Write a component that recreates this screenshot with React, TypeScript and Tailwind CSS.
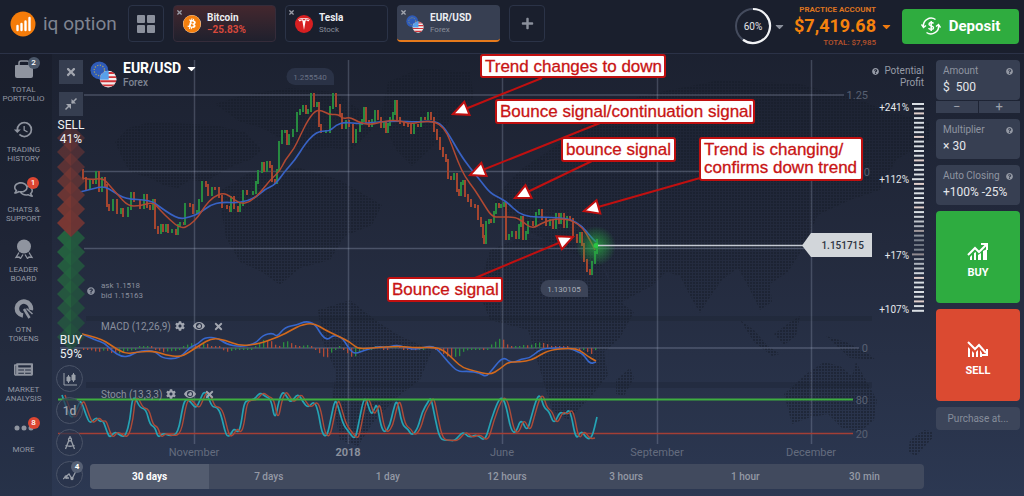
import { FaBitcoin, FaCaretDown, FaCog, FaEye, FaNewspaper, FaPlus, FaQuestionCircle, FaRegComments, FaTimes } from 'react-icons/fa'
import { MdHistory } from 'react-icons/md'
import { SiTesla } from 'react-icons/si'

type Point = [number, number]

const prices: Point[] = [
  [81, 170], [83, 178], [86, 188], [90, 180], [93, 182], [96, 172], [99, 190], [102, 178], [105, 185], [107, 205], [109, 209], [113, 200],
  [117, 212], [121, 209], [123, 215], [128, 208], [131, 193], [134, 200], [140, 207], [144, 195], [147, 206], [150, 208],
  [153, 200], [155, 227], [158, 232], [161, 225], [163, 230], [166, 225], [168, 231], [172, 230], [176, 233], [178, 225],
  [180, 223], [184, 223], [185, 204], [190, 205], [193, 212], [197, 211], [199, 200], [202, 182], [206, 185], [208, 194],
  [212, 188], [215, 188], [219, 196], [222, 206], [227, 207], [230, 210], [231, 197], [234, 207], [238, 210], [240, 204],
  [243, 191], [247, 193], [253, 192], [256, 182], [258, 171], [262, 163], [264, 170], [267, 162], [270, 166], [272, 180],
  [275, 182], [277, 170], [279, 142], [282, 131], [285, 131], [287, 143], [289, 135], [293, 130], [297, 113], [300, 110],
  [303, 106], [306, 112], [308, 110], [311, 94], [314, 105], [317, 103], [319, 125], [321, 131], [326, 131], [330, 107],
  [333, 94], [336, 105], [340, 114], [342, 127], [346, 121], [349, 125], [353, 141], [356, 130], [360, 123], [362, 120],
  [364, 108], [366, 121], [369, 125], [372, 120], [375, 111], [378, 118], [381, 126], [384, 123], [386, 131], [388, 124],
  [390, 118], [393, 113], [395, 101], [397, 118], [400, 122], [404, 124], [408, 125], [411, 132], [414, 125], [418, 125],
  [421, 118], [425, 118], [428, 113], [431, 118], [434, 130], [437, 138], [440, 148], [443, 155], [446, 160], [448, 177],
  [451, 178], [454, 174], [457, 190], [459, 194], [461, 183], [463, 181], [465, 195], [468, 200], [471, 205], [475, 206],
  [478, 218], [481, 225], [483, 236], [484, 242], [486, 222], [489, 220], [491, 221], [494, 212], [496, 204], [499, 206],
  [501, 205], [504, 203], [506, 238], [509, 235], [512, 232], [516, 237], [519, 225], [521, 217], [523, 238], [526, 232],
  [528, 222], [533, 224], [536, 213], [539, 210], [542, 218], [546, 224], [550, 220], [553, 227], [556, 214], [559, 222],
  [561, 214], [564, 226], [567, 217], [570, 219], [573, 235], [577, 241], [580, 233], [582, 244], [584, 260], [587, 270],
  [590, 273], [592, 262], [595, 252], [597, 240],
]

const fastAverage: Point[] = [
  [82, 178], [90, 180], [103, 178], [110, 186], [118, 195], [128, 206], [140, 206], [153, 202], [160, 210], [170, 220],
  [181, 229], [190, 225], [198, 217], [205, 206], [213, 197], [223, 193], [230, 196], [240, 204], [250, 202], [260, 193],
  [270, 180], [280, 171], [285, 160], [294, 149], [300, 136], [308, 120], [315, 111], [321, 110], [330, 115], [338, 114],
  [343, 119], [350, 117], [358, 122], [370, 125], [385, 121], [398, 120], [410, 124], [420, 122], [434, 121], [444, 128],
  [450, 140], [458, 162], [465, 177], [475, 190], [483, 203], [492, 217], [500, 217], [515, 217], [522, 221], [532, 229],
  [542, 223], [553, 219], [565, 219], [573, 221], [583, 228], [590, 240], [595, 250],
]

const slowAverage: Point[] = [
  [80, 192], [92, 189], [104, 186], [114, 192], [125, 199], [150, 200], [160, 207], [170, 214], [180, 219], [190, 217],
  [200, 213], [210, 205], [222, 202], [240, 203], [255, 198], [265, 189], [275, 185], [285, 171], [295, 160], [305, 144],
  [313, 135], [320, 131], [330, 131], [336, 125], [345, 122], [360, 124], [375, 122], [400, 121], [415, 122], [430, 121],
  [440, 123], [448, 133], [460, 154], [470, 168], [480, 180], [490, 193], [500, 198], [508, 203], [518, 213], [530, 217],
  [545, 217], [560, 218], [570, 219], [582, 226], [590, 236], [596, 242],
]

const macd: Point[] = [
  [82, 334], [95, 340], [105, 343], [112, 351], [122, 357], [130, 356], [136, 352], [148, 350], [156, 352], [162, 358],
  [175, 359], [183, 355], [190, 347], [198, 344], [205, 337], [218, 338], [226, 344], [240, 347], [255, 344], [263, 335],
  [273, 333], [277, 337], [285, 327], [297, 325], [306, 321], [315, 324], [322, 336], [328, 340], [333, 335], [341, 337],
  [345, 342], [350, 350], [355, 354], [365, 350], [380, 346], [385, 348], [396, 345], [405, 347], [415, 350], [432, 345],
  [440, 352], [448, 362], [458, 372], [468, 371], [480, 373], [486, 377], [492, 370], [500, 360], [505, 358], [510, 362],
  [516, 362], [521, 359], [530, 358], [538, 351], [545, 348], [570, 348], [578, 352], [583, 354], [590, 364], [596, 362],
]

const macdSignal: Point[] = [
  [82, 334], [100, 338], [112, 346], [125, 354], [138, 352], [155, 351], [165, 355], [180, 357], [188, 353], [200, 345],
  [212, 338], [225, 340], [240, 346], [258, 344], [270, 340], [285, 334], [300, 325], [314, 323], [325, 330], [338, 336],
  [350, 342], [358, 349], [370, 348], [400, 346], [415, 348], [435, 347], [445, 351], [455, 361], [463, 368], [475, 371],
  [490, 375], [500, 369], [508, 362], [520, 362], [532, 360], [540, 355], [550, 350], [570, 348], [580, 350], [587, 356],
  [596, 361],
]

const stoch: Point[] = [
  [62, 395], [67, 410], [72, 419], [76, 411], [80, 401], [82, 403], [86, 415], [90, 424], [96, 417], [100, 422],
  [103, 420], [107, 432], [110, 438], [115, 431], [122, 437], [126, 435], [130, 420], [132, 400], [135, 397], [140, 408],
  [146, 409], [150, 425], [155, 427], [158, 438], [163, 433], [170, 436], [178, 434], [183, 405], [186, 399], [190, 401],
  [196, 409], [200, 400], [204, 391], [208, 396], [212, 407], [217, 407], [221, 414], [226, 436], [230, 436], [234, 428],
  [238, 433], [241, 425], [244, 403], [248, 400], [254, 400], [260, 392], [266, 397], [271, 399], [275, 421], [279, 400],
  [283, 391], [287, 397], [291, 403], [298, 393], [303, 402], [308, 408], [314, 401], [318, 410], [322, 434], [327, 437],
  [331, 418], [335, 399], [338, 406], [343, 424], [348, 431], [355, 440], [358, 427], [363, 401], [366, 398], [371, 415],
  [374, 410], [377, 403], [381, 427], [385, 433], [390, 425], [393, 411], [397, 398], [402, 425], [408, 429], [412, 436],
  [418, 428], [422, 412], [428, 402], [431, 397], [435, 418], [440, 440], [448, 440], [455, 441], [463, 431], [469, 438],
  [477, 434], [485, 442], [491, 420], [498, 401], [502, 397], [506, 405], [511, 431], [516, 433], [521, 418], [527, 432],
  [531, 418], [536, 400], [540, 394], [544, 408], [549, 411], [554, 425], [560, 411], [565, 415], [570, 408], [576, 441],
  [581, 430], [587, 439], [592, 438], [597, 417],
]

const continents = [
  'M115 142L128 128L150 122L215 125L245 132L262 150L250 160L235 165L222 172L205 182L190 180L178 188L165 186L150 178L130 172L122 158Z',
  'M215 104L240 96L262 92L290 88L335 92L360 110L372 130L352 150L330 148L300 150L262 128L240 122Z',
  'M218 192L250 172L300 168L340 180L382 205L372 225L345 236L330 260L300 268L280 285L262 272L240 262L226 238Z',
  'M388 82L420 68L470 72L474 98L450 120L440 140L412 166L396 150L380 118Z',
  'M318 310L350 300L378 322L400 336L432 350L420 380L396 398L372 424L358 446L340 440L332 400L336 372L322 340Z',
  'M490 250L520 238L566 240L600 262L618 300L634 312L620 338L604 352L608 375L590 398L568 420L552 410L540 370L528 330L490 320L478 290Z',
  'M492 200L520 170L550 150L590 120L640 96L720 80L800 84L860 100L890 112L930 122L930 140L896 160L880 190L850 200L818 215L802 250L788 272L770 284L772 302L760 310L750 290L738 268L722 280L708 300L700 313L690 296L680 276L666 272L652 286L618 304L606 270L566 250L530 232Z',
  'M616 380L630 368L634 378L624 396L616 394Z',
  'M740 320L754 330L768 346L780 354L772 356L754 342Z',
  'M774 334L790 322L800 316L796 336L784 345Z',
  'M826 336L846 342L866 352L876 360L850 358Z',
  'M784 394L806 374L824 362L840 366L852 376L856 362L868 384L877 400L874 420L860 432L842 428L828 414L808 418L792 424Z',
  'M910 440L924 430L938 432L916 456L908 452Z',
]

const annotations = [
  { lines: ['Trend changes to down'], x: 481, y: 55, w: 184, h: 22, from: [542, 78], tip: [453, 114] },
  { lines: ['Bounce signal/continuation signal'], x: 496, y: 100, w: 258, h: 23, from: [600, 123], tip: [470, 175] },
  { lines: ['bounce signal'], x: 562, y: 138, w: 113, h: 23, from: [592, 161], tip: [515, 198] },
  { lines: ['Trend is changing/', 'confirms down trend'], x: 700, y: 138, w: 162, h: 42, from: [700, 178], tip: [584, 211] },
  { lines: ['Bounce signal'], x: 388, y: 278, w: 114, h: 23, from: [475, 278], tip: [573, 237] },
]

const months = [
  { x: 194, label: 'November' },
  { x: 348, label: '2018' },
  { x: 502, label: 'June' },
  { x: 657, label: 'September' },
  { x: 811, label: 'December' },
]

const frames = ['30 days', '7 days', '1 day', '12 hours', '3 hours', '1 hour', '30 min']

// midpoint quadratic smoothing
function toCurve(points: Point[], dx = 0) {
  let d = `M${points[0][0] + dx} ${points[0][1]}`
  for (let i = 1; i < points.length - 1; i++) {
    const [x, y] = points[i]
    const [nx, ny] = points[i + 1]
    d += `Q${x + dx} ${y} ${(x + nx) / 2 + dx} ${(y + ny) / 2}`
  }
  const last = points[points.length - 1]
  return `${d}L${last[0] + dx} ${last[1]}`
}

function valueAt(points: Point[], x: number) {
  for (let i = 1; i < points.length; i++) {
    if (x <= points[i][0]) {
      const [x0, y0] = points[i - 1]
      const [x1, y1] = points[i]
      return y0 + ((y1 - y0) * (x - x0)) / (x1 - x0)
    }
  }
  return points[points.length - 1][1]
}

function arrowHead([fx, fy]: number[], [tx, ty]: number[]) {
  const len = Math.hypot(tx - fx, ty - fy)
  const ux = (tx - fx) / len
  const uy = (ty - fy) / len
  const bx = tx - ux * 15
  const by = ty - uy * 15
  return `${tx},${ty} ${bx - uy * 7},${by + ux * 7} ${bx + uy * 7},${by - ux * 7}`
}

function Flags({ className }: { className: string }) {
  return (
    <svg viewBox="0 0 26 26" className={className} aria-hidden>
      <circle cx="9" cy="9" r="8.5" fill="#2f5bb8" />
      <circle cx="9" cy="9" r="5" fill="none" stroke="#a8a25c" strokeWidth="1.2" strokeDasharray="1.2 1.4" />
      <clipPath id="us"><circle cx="17.5" cy="17.5" r="8" /></clipPath>
      <g clipPath="url(#us)">
        <rect x="9" y="9" width="17" height="17" fill="#f3eeee" />
        <path d="M9 11.5h17M9 15.5h17M9 19.5h17M9 23.5h17" stroke="#d03238" strokeWidth="1.8" />
        <rect x="9" y="9" width="9" height="9" fill="#58a0ea" />
      </g>
    </svg>
  )
}

function Header() {
  return (
    <header className="flex h-[54px] shrink-0 items-start border-b border-[#2b3247] bg-[#1a1f2d] pr-[5px] pl-[10px]">
      <a href="#home" className="mt-[11px] flex w-[118px] items-center gap-[7px]" aria-label="iq option">
        <svg viewBox="0 0 26 26" className="size-[26px]" aria-hidden>
          <circle cx="13" cy="13" r="12.5" fill="#f57c0a" />
          <path d="M7.5 19v-4M11.5 19v-6M15.5 19v-8.500M19.500 19V7" stroke="#fff" strokeWidth="2.400" strokeLinecap="round" />
        </svg>
        <span className="text-[19px] leading-6 text-[#7f8491]">iq option</span>
      </a>
      <nav className="mt-[5px] flex gap-[9px]" aria-label="Open assets">
        <button className="flex h-[37px] w-9 items-center justify-center rounded-sm border border-[#2b3347]" aria-label="Layout">
          <svg viewBox="0 0 18 18" className="size-[18px] fill-[#8b909c]" aria-hidden>
            <rect width="8" height="8" rx="1" />
            <rect x="10" width="8" height="8" rx="1" />
            <rect y="10" width="8" height="8" rx="1" />
            <rect x="10" y="10" width="8" height="8" rx="1" />
          </svg>
        </button>
        <button className="relative flex h-[37px] w-[103px] items-center gap-[6px] rounded-sm border border-[#352c3a] bg-linear-to-b from-[#44272e] to-[#1f202d] pl-[9px] text-left">
          <FaTimes className="absolute top-[3px] left-[2px] size-[7px] text-[#9a9ea8]" />
          <span className="size-[18px] shrink-0 rounded-full bg-white"><FaBitcoin className="size-[18px] text-[#f5800f]" /></span>
          <span>
            <span className="block text-[10px] leading-3 font-bold text-[#eceef1]">Bitcoin</span>
            <span className="block text-[10px] leading-3 font-bold text-[#d8493c]">−25.83%</span>
          </span>
        </button>
        <button className="relative flex h-[37px] w-[103px] items-center gap-[6px] rounded-sm border border-[#2b3347] pl-[9px] text-left">
          <FaTimes className="absolute top-[3px] left-[2px] size-[7px] text-[#9a9ea8]" />
          <span className="flex size-[18px] shrink-0 items-center justify-center rounded-full bg-[#d71f21]"><SiTesla className="size-3 text-white" /></span>
          <span>
            <span className="block text-[10px] leading-3 font-bold text-[#eceef1]">Tesla</span>
            <span className="block text-[8px] leading-3 text-[#8a8f9b]">Stock</span>
          </span>
        </button>
        <button className="relative flex h-[37px] w-[103px] items-center gap-[6px] rounded-sm border-b-2 border-[#e67a1c] bg-[#373f52] pt-[2px] pl-[9px] text-left">
          <FaTimes className="absolute top-[4px] left-[3px] size-[7px] text-[#a3a7b0]" />
          <Flags className="size-[18px] shrink-0" />
          <span>
            <span className="block text-[10px] leading-3 font-bold text-[#eceef1]">EUR/USD</span>
            <span className="block text-[8px] leading-3 text-[#8a8f9b]">Forex</span>
          </span>
        </button>
        <button className="flex h-[37px] w-9 items-center justify-center rounded-sm border border-[#2b3347] text-[#8b909c]" aria-label="Add asset">
          <FaPlus className="size-[13px]" />
        </button>
      </nav>
      <div className="mt-[5px] ml-auto flex items-center">
        <svg viewBox="0 0 38 38" className="size-[38px]" role="img" aria-label="60%">
          <circle cx="19" cy="19" r="17" fill="none" stroke="#444b5d" strokeWidth="2" />
          <path d="M19 2A17 17 0 1 1 9 32.750" fill="none" stroke="#f2f3f5" strokeWidth="2.200" />
          <text x="19" y="23" textAnchor="middle" fontSize="10" fill="#e3e5e9">60%</text>
        </svg>
        <FaCaretDown className="ml-px size-[13px] text-[#8b909c]" />
        <div className="ml-[6px] w-[84px] text-right font-medium">
          <p className="text-[8px] leading-[9px] font-bold whitespace-nowrap text-[#dd7420]">PRACTICE ACCOUNT</p>
          <p className="text-[18px] leading-6 font-bold text-[#f5820d]">$7,419.68</p>
          <p className="text-[8px] leading-[9px] text-[#b8532c]">TOTAL: $7,985</p>
        </div>
        <FaCaretDown className="mr-[9px] ml-1 size-[13px] text-[#ee7a10]" />
        <button className="flex h-[35px] w-[117px] items-center justify-center gap-2 rounded-sm bg-[#2fac3f] text-[15px] font-bold text-white">
          <svg viewBox="0 0 20 20" className="size-5" fill="none" stroke="#fff" strokeWidth="1.500" aria-hidden>
            <path d="M2.500 11A7.700 7.700 0 0 1 14.500 3.500M17.500 9A7.700 7.700 0 0 1 5.500 16.500" />
            <path d="M.5 8.500L2.500 11.500L5 9.500M19.500 11.500L17.500 8.500L15 10.500" />
            <path d="M12.500 7.500C11.500 6.200 8 6.200 8 8.200S12.500 9.600 12.500 11.700S9 13.800 7.500 12.300M10.200 5v10" />
          </svg>
          Deposit
        </button>
      </div>
    </header>
  )
}

const menu = [
  {
    label: ['TOTAL', 'PORTFOLIO'],
    badge: '2',
    badgeClass: 'bg-[#4c586a]',
    icon: (
      <svg viewBox="0 0 20 20" className="size-5" aria-hidden>
        <path d="M5 7V4Q5 2 7 2H13Q15 2 15 4V7" fill="none" stroke="currentColor" strokeWidth="1.500" />
        <path d="M2 6H18Q19 6 19 7V17Q19 19 17 19H3Q1 19 1 17V7Q1 6 2 6Z" fill="currentColor" />
      </svg>
    ),
  },
  { label: ['TRADING', 'HISTORY'], icon: <MdHistory className="size-[21px]" /> },
  { label: ['CHATS &', 'SUPPORT'], badge: '1', badgeClass: 'bg-[#dc4632]', icon: <FaRegComments className="size-[19px]" /> },
  {
    label: ['LEADER', 'BOARD'],
    icon: (
      <svg viewBox="0 0 20 20" className="size-5" aria-hidden>
        <circle cx="10" cy="7.500" r="7" fill="currentColor" />
        <path d="M5 13.500L2 18.500L5 18L6.500 19.500L9 15.500M15 13.500L18 18.500L15 18L13.500 19.500L11 15.500" fill="none" stroke="currentColor" strokeWidth="1.300" />
      </svg>
    ),
  },
  {
    label: ['OTN', 'TOKENS'],
    icon: (
      <svg viewBox="0 0 20 20" className="size-5" fill="none" stroke="currentColor" aria-hidden>
        <path d="M9 16.500A7 7 0 1 1 16.800 11" strokeWidth="4.500" />
        <path d="M10 10L15.500 19" strokeWidth="2.500" />
        <path d="M12.500 9.500L18.500 15" strokeWidth="1.500" />
      </svg>
    ),
  },
  { label: ['MARKET', 'ANALYSIS'], icon: <FaNewspaper className="size-[19px]" /> },
  {
    label: ['MORE'],
    badge: '8',
    badgeClass: 'bg-[#dc4632]',
    icon: (
      <svg viewBox="0 0 20 20" className="size-5 fill-current" aria-hidden>
        <circle cx="3" cy="9" r="2.500" />
        <circle cx="10" cy="9" r="2.500" />
        <circle cx="17" cy="9" r="2.500" />
      </svg>
    ),
  },
]

function Sidebar() {
  return (
    <nav className="w-[52px] shrink-0 bg-black/10 pt-[5px] pr-[5px]" aria-label="Main menu">
      {menu.map((item) => (
        <a key={item.label[0]} href={`#${item.label[0].toLowerCase()}`} className="flex h-[60px] flex-col items-center">
          <span className="relative flex h-5 items-center text-[#8f949f]">
            {item.icon}
            {item.badge && (
              <span className={`absolute -top-[2px] -right-[6px] flex size-3 items-center justify-center rounded-full text-[8px] font-medium text-white ${item.badgeClass}`}>
                {item.badge}
              </span>
            )}
          </span>
          <span className="mt-[6px] text-center text-[8px] leading-[9px] text-[#9297a3]">
            {item.label.map((line) => <span key={line} className="block">{line}</span>)}
          </span>
        </a>
      ))}
    </nav>
  )
}

function Tools() {
  const round = 'relative flex size-[27px] shrink-0 items-center justify-center rounded-full border border-[#4b5468] bg-[#2a334a]/70 text-[#9aa0aa]'
  return (
    <div className="relative flex w-[30px] shrink-0 flex-col items-center pt-[6px]">
      <button className="flex size-6 shrink-0 items-center justify-center bg-[#363e50] text-[#a2a6af]" aria-label="Close chart">
        <FaTimes className="size-3" />
      </button>
      <button className="mt-2 flex size-6 shrink-0 items-center justify-center bg-[#363e50] text-[#a2a6af]" aria-label="Collapse chart">
        <svg viewBox="0 0 14 14" className="size-[14px]" aria-hidden>
          <path d="M1.500 12.500L6 8M12.500 1.500L8 6" stroke="currentColor" strokeWidth="1.500" />
          <path d="M2 7H7V12ZM7.500 2V6.500H12Z" fill="currentColor" />
        </svg>
      </button>
      <div className="relative mt-[2px] flex h-[243px] w-[30px] flex-col items-center text-[12px] leading-[14px] text-[#eef0f2]">
        <svg viewBox="56 118 30 243" className="absolute inset-0 h-full w-full" aria-hidden>
          {[337, 323, 308, 294, 280, 266, 252, 238].map((y, i) => (
            <g key={y}>
              <path d={`M71 ${y - 14}L57 ${y}L71 ${y + 14}L85 ${y}Z`} fill="#25643f" fillOpacity={0.6 + i * 0.05} />
              <path d={`M71 ${y - 14}L85 ${y}L71 ${y + 14}Z`} fill="#1f2c3c" fillOpacity="0.22" />
            </g>
          ))}
          {[138, 152, 167, 181, 195, 209, 223].map((y, i) => (
            <g key={y}>
              <path d={`M71 ${y - 14}L57 ${y}L71 ${y + 14}L85 ${y}Z`} fill="#7a3833" fillOpacity={0.5 + i * 0.08} />
              <path d={`M71 ${y - 14}L85 ${y}L71 ${y + 14}Z`} fill="#242a3c" fillOpacity="0.15" />
            </g>
          ))}
        </svg>
        <span className="relative">SELL</span>
        <span className="relative">41%</span>
        <span className="relative mt-auto">BUY</span>
        <span className="relative">59%</span>
      </div>
      <div className="mt-[4px] flex flex-col gap-[5px] pr-[3px]">
        <button className={round} aria-label="Chart type">
          <svg viewBox="0 0 14 14" className="size-[14px]" fill="none" stroke="currentColor" aria-hidden>
            <path d="M1 1V13H14M5.500 3V11M10.500 1V10" />
            <path d="M4 5h3v4H4zM9 3h3v5H9z" fill="currentColor" />
          </svg>
        </button>
        <button className={`${round} text-[12px] font-medium`}>1d</button>
        <button className={round} aria-label="Drawing tools">
          <svg viewBox="0 0 14 14" className="size-[14px]" fill="none" stroke="currentColor" strokeWidth="1.300" aria-hidden>
            <path d="M7 0V2M6 4L2.500 13M8 4L11.500 13M2.500 9.500Q7 11 11.500 9.500" />
            <circle cx="7" cy="3.500" r="1.500" />
          </svg>
        </button>
        <button className={round} aria-label="Indicators">
          <svg viewBox="0 0 14 14" className="size-[14px]" fill="none" stroke="currentColor" strokeWidth="1.300" aria-hidden>
            <path d="M0 11L3 8.500L6 6L9 11L13 3M3 10H6" />
            <circle cx="3" cy="9" r="1" />
            <circle cx="9" cy="10.500" r="1" />
          </svg>
          <span className="absolute -top-[1px] -right-[1px] flex size-3 items-center justify-center rounded-full bg-[#566074] text-[8px] font-bold text-white">4</span>
        </button>
      </div>
    </div>
  )
}

function Chart() {
  const bars: { x: number; y: number; h: number; up: boolean }[] = []
  for (let i = 1; i < prices.length; i++) {
    const [x, y] = prices[i]
    const prev = prices[i - 1][1]
    bars.push({ x, y: Math.min(prev, y) - 1, h: Math.abs(y - prev) + 3, up: y < prev || (y === prev && i % 2 === 0) })
  }
  const histogram: { x: number; v: number; up: boolean }[] = []
  for (let x = 83; x < 597; x += 4) {
    const v = (valueAt(macdSignal, x) - valueAt(macd, x)) * 1.1
    const before = (valueAt(macdSignal, x - 4) - valueAt(macd, x - 4)) * 1.1
    histogram.push({ x, v: Math.abs(v) < 2 ? (v < 0 ? -2 : 2) : v, up: v >= before })
  }

  return (
    <svg viewBox="52 54 880 442" preserveAspectRatio="xMinYMin meet" className="absolute top-0 left-0 h-[442px] w-full" role="img" aria-label="EUR/USD price chart">
      <defs>
        <pattern id="dots" width="3" height="3" patternUnits="userSpaceOnUse">
          <rect width="2" height="2" fill="#161b28" fillOpacity="0.5" />
        </pattern>
        <radialGradient id="glow">
          <stop offset="0" stopColor="#28b442" stopOpacity="0.75" />
          <stop offset="1" stopColor="#28b442" stopOpacity="0" />
        </radialGradient>
      </defs>
      {continents.map((d) => <path key={d} d={d} fill="url(#dots)" />)}
      <path d="M86 316H872V321H86ZM86 382H872V388H86Z" fill="#1b2130" fillOpacity="0.3" />

      {/* Grid */}
      {months.map((m) => (
        <g key={m.label}>
          <path d={`M${m.x + 0.5} 60V444`} stroke="#aab4cd" strokeOpacity="0.26" strokeWidth="1.500" />
          <text x={m.x} y="456" textAnchor="middle" fontSize="11" fontWeight={m.label === '2018' ? 700 : 400} fill={m.label === '2018' ? '#8a909d' : '#646c7e'}>
            {m.label}
          </text>
        </g>
      ))}
      <path d="M84 95H844M84 171.500H844M84 248.500H844M60 348H859" stroke="#aab4cd" strokeOpacity="0.3" strokeWidth="1.500" />
      <g fontSize="11" fill="#586072" textAnchor="end">
        <text x="868" y="99">1.25</text>
        <text x="870" y="176">0</text>
        <text x="868" y="352">0</text>
        <text x="868" y="404">80</text>
        <text x="868" y="438">20</text>
      </g>

      {/* Extremes */}
      <path d="M295 68H325A9 9 0 0 1 334 77V85H295A8.500 8.500 0 0 1 295 68Z" fill="#2a3246" />
      <text x="310" y="80" textAnchor="middle" fontSize="8" fill="#687083">1.255540</text>
      <path d="M549 280H579A9 9 0 0 1 588 289V297H549A8.500 8.500 0 0 1 549 280Z" fill="#3b4357" />
      <text x="564" y="292" textAnchor="middle" fontSize="8" fill="#a9aeb8">1.130105</text>

      {/* Price */}
      {bars.map((b) => (
        <rect key={`${b.x}-${b.y}`} x={b.x - 1} y={b.y} width="2" height={b.h} fill={b.up ? '#278a40' : '#a4452f'} />
      ))}
      <path d={toCurve(slowAverage)} fill="none" stroke="#3862c4" strokeWidth="1.700" />
      <path d={toCurve(fastAverage)} fill="none" stroke="#b14932" strokeWidth="1.500" />
      <circle cx="596" cy="246" r="20" fill="url(#glow)" />
      <circle cx="596" cy="245.500" r="2.500" fill="#2bc544" />
      <path d="M598 245.500H804" stroke="#c4c9d2" strokeWidth="1.500" />
      <path d="M802 245.500L811 233H872V257H811Z" fill="#d2d6da" />
      <text x="864" y="249" textAnchor="end" fontSize="10" fontWeight="500" fill="#2d3340">1.151715</text>

      {/* MACD */}
      {histogram.map((h) => (
        <rect key={h.x} x={h.x} y={h.v > 0 ? 348 - h.v : 348} width="1.300" height={Math.abs(h.v)} fill={h.up ? '#2a8c3e' : '#b04a35'} />
      ))}
      <path d={toCurve(macd)} fill="none" stroke="#3767cc" strokeWidth="1.600" />
      <path d={toCurve(macdSignal)} fill="none" stroke="#d2691c" strokeWidth="1.600" />

      {/* Stochastic */}
      <path d="M58 433.500H853" stroke="#a33f35" strokeWidth="1.300" />
      <path d={toCurve(stoch)} fill="none" stroke="#25a3b4" strokeWidth="1.700" />
      <path d={toCurve(stoch.slice(0, -1), 3)} fill="none" stroke="#ad4b38" strokeWidth="1.400" />
      <path d="M58 399.500H853" stroke="#3fae40" strokeWidth="1.800" />

      {/* Notes */}
      {annotations.map((a) => (
        <g key={a.x} stroke="#c01010" strokeWidth="2">
          <path d={`M${a.from[0]} ${a.from[1]}L${a.tip[0]} ${a.tip[1]}`} />
          <polygon points={arrowHead(a.from, a.tip)} fill="#fff" />
        </g>
      ))}
      {annotations.map((a) => (
        <g key={a.x}>
          <rect x={a.x} y={a.y} width={a.w} height={a.h} rx="2" fill="#fff" stroke="#c01010" strokeWidth="2" />
          {a.lines.map((line, i) => (
            <text key={line} x={a.x + 4} y={a.y + 17 + i * 18} fontFamily="Liberation Sans, Arial, sans-serif" fontSize="17" fill="#c81414" stroke="#c81414" strokeWidth="0.300">
              {line}
            </text>
          ))}
        </g>
      ))}
    </svg>
  )
}

function IndicatorRow({ name, className }: { name: string; className: string }) {
  return (
    <div className={`flex h-[14px] items-center text-[#a2a6b0] ${className}`}>
      <span className="mr-[4px] text-[10px] text-[#8a909e]">{name}</span>
      <button aria-label={`${name} settings`}><FaCog className="size-[10px]" /></button>
      <button className="ml-[8px]" aria-label={`Show ${name}`}><FaEye className="size-3" /></button>
      <button className="ml-[8px]" aria-label={`Remove ${name}`}><FaTimes className="size-[11px]" /></button>
    </div>
  )
}

function ProfitScale() {
  const ticks = Array.from({ length: 45 }, (_, i) => i)
  const wide = [0, 16, 32, 44]
  return (
    <div className="flex flex-col items-end pt-[11px]">
      <p className="text-right text-[10px] leading-3 text-[#959aa6]">
        <FaQuestionCircle className="mr-[5px] inline size-[7px]" />Potential<br />Profit
      </p>
      <svg viewBox="0 0 50 216" className="mt-[11px] h-[216px] w-[50px]" role="img" aria-label="Potential profit scale">
        {ticks.map((i) => {
          const isWide = wide.includes(i)
          const fade = i < 24 ? 1 : Math.min(1, 0.4 + Math.abs(i - 30) * 0.09)
          return (
            <rect key={i} x={isWide ? 38 : 40} y={3 + i * 4.7} width={isWide ? 12 : 10} height="2" fill={i % 5 === 2 ? '#e0cfcb' : '#d9dee3'} opacity={fade} />
          )
        })}
        <g fontSize="10" fill="#e6e8ec" textAnchor="end">
          <text x="35" y="11">+241%</text>
          <text x="35" y="83">+112%</text>
          <text x="35" y="159">+17%</text>
          <text x="35" y="213">+107%</text>
        </g>
      </svg>
    </div>
  )
}

function Field({ label, value, children }: { label: string; value: string; children?: React.ReactNode }) {
  const id = label.toLowerCase().replace(' ', '-')
  return (
    <div>
      <div className="h-10 rounded-sm bg-[#373f52] pt-1 pr-[7px] pl-[7px]">
        <div className="flex items-center justify-between">
          <label htmlFor={id} className="text-[10px] leading-[14px] whitespace-nowrap text-[#8f95a1]">{label}</label>
          <FaQuestionCircle className="size-[7px] text-[#9398a3]" />
        </div>
        <input id={id} defaultValue={value} className="block h-[18px] w-full bg-transparent text-[12px] text-[#e4e6ea] outline-none" />
      </div>
      {children}
    </div>
  )
}

function TradePanel() {
  return (
    <aside className="flex w-[92px] shrink-0 flex-col gap-[6px] px-1 pt-[6px]">
      <Field label="Amount" value="$  500">
        <div className="mt-px grid grid-cols-2 gap-px text-[13px] leading-3 text-[#9ca1ab]">
          <button className="h-3 bg-[#373f52]" aria-label="Decrease amount">−</button>
          <button className="h-3 bg-[#373f52]" aria-label="Increase amount">+</button>
        </div>
      </Field>
      <Field label="Multiplier" value="× 30" />
      <Field label="Auto Closing" value="+100% -25%" />
      <button className="flex h-[92px] flex-col items-center justify-center gap-[5px] rounded-sm bg-[#2eac40] pt-2 text-[11px] leading-4 font-bold text-white">
        <svg viewBox="0 0 22 18" className="h-[18px] w-[22px]" aria-hidden>
          <path d="M1 13L8 6L12 10L19 3M14 2H20V8" fill="none" stroke="#fff" strokeWidth="2" />
          <path d="M3 18V15L5 13V18ZM7 18V11L9 10V18ZM11 18V13L14 11V18ZM16 18V9L20 7V18Z" fill="#fff" />
        </svg>
        BUY
      </button>
      <button className="flex h-[92px] flex-col items-center justify-center gap-[5px] rounded-sm bg-[#db4a31] pt-2 text-[11px] leading-4 font-bold text-white">
        <svg viewBox="0 0 22 18" className="h-[18px] w-[22px]" aria-hidden>
          <path d="M1 2L8 9L12 5L19 13M20 9V15H14" fill="none" stroke="#fff" strokeWidth="2" />
          <path d="M1 17V7L3 9V17ZM5 17V11L7 13V17ZM9 17V12L11 10V17ZM13 17V10L15 13V17Z" fill="#fff" />
        </svg>
        SELL
      </button>
      <button className="h-[23px] rounded-sm bg-[#3c455a] text-[10px] text-[#868d9b]">Purchase at...</button>
    </aside>
  )
}

export default function App() {
  return (
    <div className="flex min-h-screen flex-col overflow-hidden bg-linear-to-b from-[#1a1f2d] via-[#232a3d] to-[#2c3852] font-[Roboto,sans-serif]">
      <Header />
      <div className="flex flex-1">
        <Sidebar />
        <main className="relative flex min-w-0 flex-1 gap-1 pr-2 pl-1">
          <Chart />
          <Tools />
          <div className="relative flex min-w-0 flex-1 flex-col">
            <div className="flex justify-between">
              <div className="pt-[6px]">
                <div className="flex h-7 items-start gap-[6px]">
                  <Flags className="mt-px size-[27px]" />
                  <div>
                    <button className="flex items-center gap-1 text-[14px] leading-4 font-bold text-white">
                      EUR/USD <FaCaretDown className="size-[13px]" />
                    </button>
                    <p className="text-[10px] leading-[14px] font-medium text-[#7d8492]">Forex</p>
                  </div>
                </div>
                <div className="mt-[193px] ml-[-3px] flex items-center gap-[6px] text-[8px] leading-[10px] text-[#8a909e]">
                  <FaQuestionCircle className="size-2" />
                  <p>ask 1.1518<br />bid 1.15163</p>
                </div>
                <IndicatorRow name="MACD (12,26,9)" className="mt-[18px] ml-[11px]" />
                <IndicatorRow name="Stoch (13,3,3)" className="mt-[54px] ml-[11px]" />
              </div>
              <ProfitScale />
            </div>
            <div className="mt-auto mb-[7px] flex h-[25px] overflow-hidden rounded-sm bg-[#414a5e]" role="group" aria-label="Time range">
              {frames.map((f, i) => (
                <button key={f} className={i === 0 ? 'flex-1 bg-[#535c6f] text-[10px] font-bold text-white' : 'flex-1 text-[10px] font-medium text-[#9499a5]'}>
                  {f}
                </button>
              ))}
            </div>
          </div>
        </main>
        <TradePanel />
      </div>
    </div>
  )
}
